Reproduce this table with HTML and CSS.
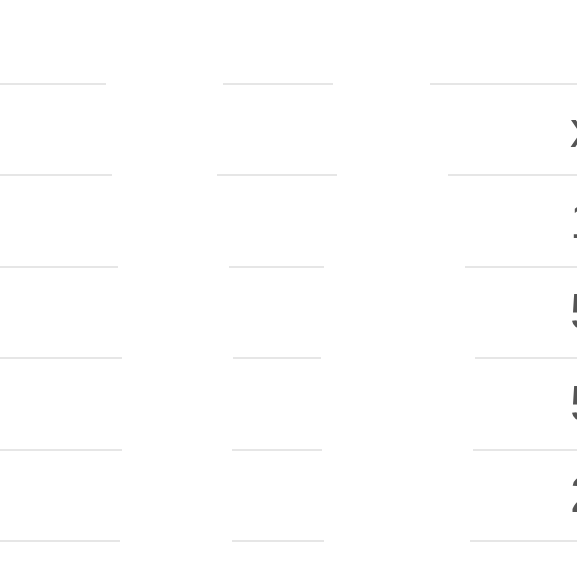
FILE: index.html
```html
<!DOCTYPE html>
<html lang="en">
<head>
<meta charset="utf-8">
<title>Table</title>
<link rel="stylesheet" href="styles.css">
</head>
<body>
<div class="table">
  <div class="rule r1"><span class="seg a"></span><span class="seg b"></span><span class="seg c"></span></div>
  <div class="row"><span class="val">x</span></div>
  <div class="rule r2"><span class="seg a"></span><span class="seg b"></span><span class="seg c"></span></div>
  <div class="row"><span class="val">1</span></div>
  <div class="rule r3"><span class="seg a"></span><span class="seg b"></span><span class="seg c"></span></div>
  <div class="row"><span class="val">5</span></div>
  <div class="rule r4"><span class="seg a"></span><span class="seg b"></span><span class="seg c"></span></div>
  <div class="row"><span class="val">5</span></div>
  <div class="rule r5"><span class="seg a"></span><span class="seg b"></span><span class="seg c"></span></div>
  <div class="row"><span class="val">2</span></div>
  <div class="rule r6"><span class="seg a"></span><span class="seg b"></span><span class="seg c"></span></div>
</div>
</body>
</html>
```

FILE: styles.css
```css
html, body {
  margin: 0;
  padding: 0;
  background: #ffffff;
  overflow: hidden;
}

body {
  width: 577px;
  height: 577px;
  font-family: "Liberation Sans", Arial, sans-serif;
}

.table {
  display: flex;
  flex-direction: column;
  padding-top: 83px;
}

.rule {
  display: flex;
  height: 2px;
}

.seg {
  display: block;
  height: 2px;
  background: #e6e6e6;
  flex: none;
}

.seg.c {
  flex: 1;
}

.row {
  height: 89.4px;
  display: flex;
  align-items: center;
  overflow: hidden;
}

.val {
  margin-left: 570px;
  font-size: 50px;
  line-height: 1;
  color: #555555;
  white-space: nowrap;
}

/* segment extents per rule */
.r1 .a { width: 106px; }
.r1 .b { margin-left: 117px; width: 110px; }
.r1 .c { margin-left: 97px; }

.r2 .a { width: 112px; }
.r2 .b { margin-left: 105px; width: 120px; }
.r2 .c { margin-left: 111px; }

.r3 .a { width: 118px; }
.r3 .b { margin-left: 111px; width: 95px; }
.r3 .c { margin-left: 141px; }

.r4 .a { width: 122px; }
.r4 .b { margin-left: 111px; width: 88px; }
.r4 .c { margin-left: 154px; }

.r5 .a { width: 122px; }
.r5 .b { margin-left: 110px; width: 90px; }
.r5 .c { margin-left: 151px; }

.r6 .a { width: 120px; }
.r6 .b { margin-left: 112px; width: 92px; }
.r6 .c { margin-left: 146px; }
```
